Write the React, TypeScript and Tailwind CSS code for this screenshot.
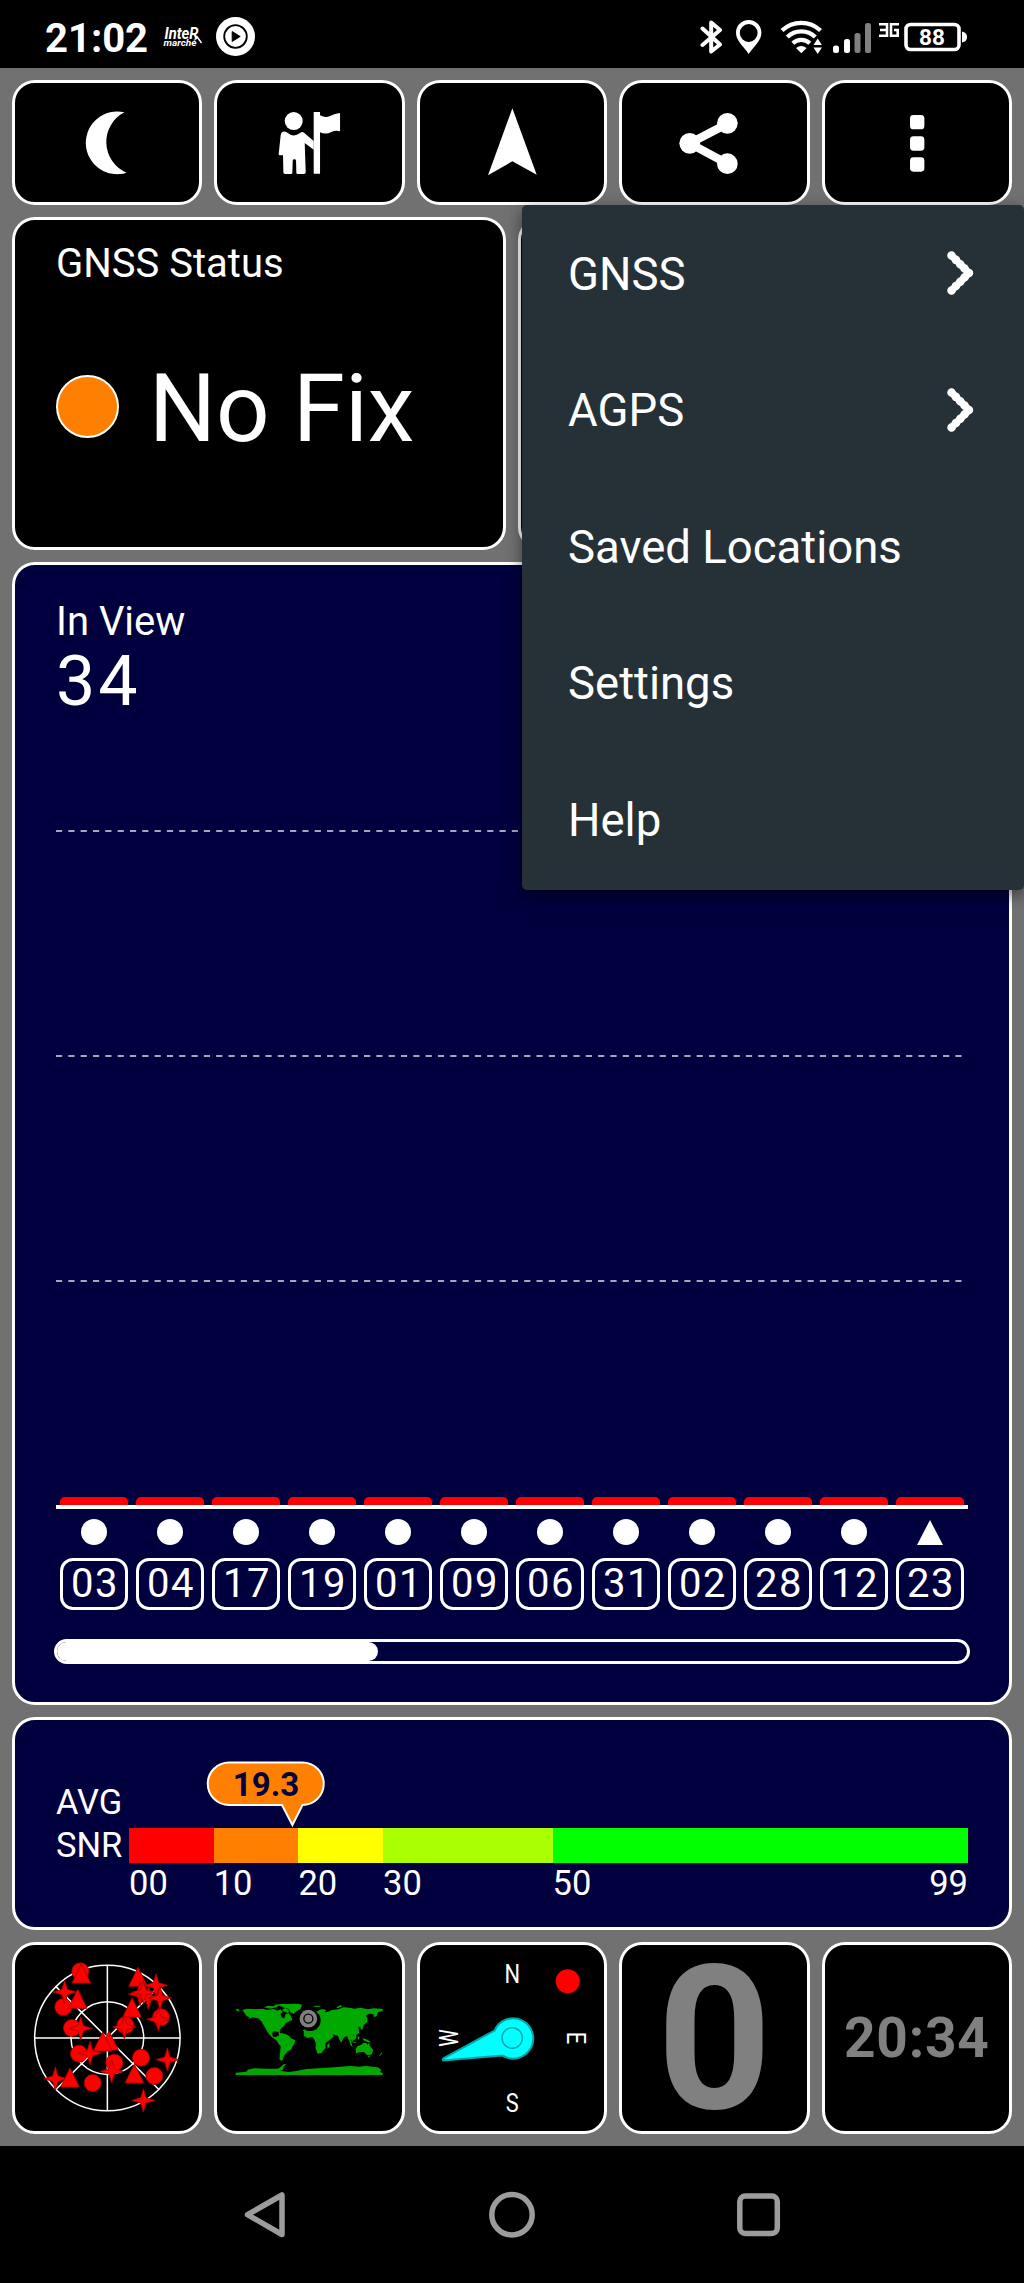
import type { ReactNode } from "react";

const SATELLITES = [
  { id: "03", shape: "circle" },
  { id: "04", shape: "circle" },
  { id: "17", shape: "circle" },
  { id: "19", shape: "circle" },
  { id: "01", shape: "circle" },
  { id: "09", shape: "circle" },
  { id: "06", shape: "circle" },
  { id: "31", shape: "circle" },
  { id: "02", shape: "circle" },
  { id: "28", shape: "circle" },
  { id: "12", shape: "circle" },
  { id: "23", shape: "triangle" },
];

const MENU = [
  { label: "GNSS", submenu: true },
  { label: "AGPS", submenu: true },
  { label: "Saved Locations", submenu: false },
  { label: "Settings", submenu: false },
  { label: "Help", submenu: false },
];

function Card({ className = "", children }: { className?: string; children?: ReactNode }) {
  return <div className={`min-w-0 rounded-[23px] border-[3px] border-white ${className}`}>{children}</div>;
}

function StatusBar() {
  return (
    <header className="flex h-[68px] items-center bg-black pl-[45px] text-white">
      <span className="mt-[9px] w-[103px] text-[40px] leading-none font-bold">21:02</span>
      <svg className="ml-[14px] h-[68px] w-[42px]" viewBox="162 0 42 68" fill="#fff">
        <g fontWeight="700" fontStyle="italic" className="font-[Roboto]">
          <text x="164.500" y="38.500" fontSize="16" textLength="34" lengthAdjust="spacingAndGlyphs">
            InteR
          </text>
          <text x="163.500" y="46" fontSize="9.500" textLength="33" lengthAdjust="spacingAndGlyphs">
            marché
          </text>
        </g>
        <path d="M196.500 36L201.500 43" stroke="#fff" strokeWidth="1.500" />
      </svg>
      <svg className="mt-[5px] ml-[12px] h-[39px] w-[39px]" viewBox="0 0 39 39">
        <circle cx="19.500" cy="19.500" r="19.500" fill="#fff" />
        <circle cx="19.500" cy="19.500" r="11.300" fill="none" stroke="#000" strokeWidth="1.800" />
        <path d="M16.200 14.600v9.800l8-4.900z" fill="#000" stroke="#000" strokeLinejoin="round" />
      </svg>
      <svg className="ml-auto h-[68px] w-[324px]" viewBox="700 0 324 68" fill="#fff">
        <path
          d="M702.5 28.5 L720 44.5 L711.2 51.5 V22.5 L720 30 L702.5 45"
          fill="none"
          stroke="#fff"
          strokeWidth="4"
          strokeLinejoin="round"
          strokeLinecap="round"
        />
        <path
          fillRule="evenodd"
          d="M748.7 20c-7.200 0-12.700 5.600-12.700 12.700 0 7.800 6.500 12.300 12.700 21.300 6.200-9 12.700-13.500 12.700-21.300 0-7.100-5.500-12.700-12.700-12.700zm0 4.100a8.900 8.900 0 1 1 0 17.800 8.900 8.900 0 0 1 0-17.800z"
        />
        <g fill="none" stroke="#fff" strokeWidth="4.200">
          <path d="M782 30.500a28 28 0 0 1 38.500 0" />
          <path d="M787.300 37a20 20 0 0 1 28 0" />
          <path d="M792.800 43.300a12.500 12.500 0 0 1 17 0" />
        </g>
        <path d="M796 48q5.300-4 10.600 0l-5.300 5.200z" />
        <path d="M813.500 45l4.200-6.500 4.200 6.500zM813.500 47.500l4.200 6.500 4.200-6.500z" />
        <rect x="833" y="45.500" width="6" height="7.500" rx="2.500" />
        <rect x="844" y="39" width="6" height="14" rx="2.500" />
        <rect x="854.500" y="33" width="6" height="20" rx="2.500" fill="#808080" />
        <rect x="865" y="23" width="6" height="30" rx="2.500" fill="#808080" />
        <g fill="none" stroke="#fff" strokeWidth="2.600">
          <path d="M879 24.300h8v11.400h-8M880 30h7" />
          <path d="M899 24.300h-8v11.400h6.700v-5.700h-3.700" />
        </g>
        <rect x="906" y="24.500" width="53" height="25" rx="4.500" fill="none" stroke="#fff" strokeWidth="3.600" />
        <path d="M962 31.500q5 1 5 5.500t-5 5.500z" />
        <text x="932" y="45" textAnchor="middle" fontSize="22.500" fontWeight="700" className="font-[Roboto]">
          88
        </text>
      </svg>
    </header>
  );
}

function Toolbar() {
  return (
    <div className="grid h-[125px] grid-cols-5 gap-3">
      <Card className="bg-black">
        <svg className="h-full w-full" viewBox="45 249 553 357" fill="#fff">
          <path d="M373 337A94 94 0 1 0 380 518A100 100 0 0 1 373 337z" />
        </svg>
      </Card>
      <Card className="bg-black">
        <svg className="h-full w-full" viewBox="652 249 553 357" fill="#fff">
          <circle cx="882" cy="363" r="27" />
          <path d="M849 395q8-1 14 3 19 16 38 1 6-5 12-1l29 25v26l-27-20 3 88q0 5-5 5h-19q-4 0-4-4l-1-36q0-4-5-4t-5 4l-1 36q0 4-4 4h-18q-5 0-5-5l-1-51h-10q-3 0-3-4l6-57q1-8 6-10z" />
          <path d="M942 336h19v10q16 9 30 2 15-8 30-9v55q-13-5-26 2-17 9-34 1v124h-19z" />
        </svg>
      </Card>
      <Card className="bg-black">
        <svg className="h-full w-full" viewBox="1259 249 553 357" fill="#fff">
          <path d="M1536 325L1609 524L1536 484L1463 526z" />
        </svg>
      </Card>
      <Card className="bg-black">
        <svg className="h-full w-full" viewBox="331 249 553 357" fill="#fff">
          <path d="M647 371L534 430L647 491" fill="none" stroke="#fff" strokeWidth="25" />
          <circle cx="534" cy="430" r="31" />
          <circle cx="647" cy="370" r="31" />
          <circle cx="647" cy="491" r="31" />
        </svg>
      </Card>
      <Card className="bg-black">
        <svg className="h-full w-full" viewBox="938 249 553 357" fill="#fff">
          <rect x="1193" y="345" width="43" height="43" rx="10" />
          <rect x="1193" y="409" width="43" height="43" rx="10" />
          <rect x="1193" y="472" width="43" height="43" rx="10" />
        </svg>
      </Card>
    </div>
  );
}

function OverflowMenu() {
  return (
    <nav className="absolute top-[205px] right-0 z-10 flex w-[502px] flex-col rounded-[5px] bg-[#263137] pb-[2px] shadow-[0_5px_16px_rgba(0,0,0,0.5)]">
      {MENU.map((item) => (
        <div key={item.label} className="flex h-[136.5px] items-center justify-between pr-[50px] pl-[46px]">
          <span className="mt-[2px] text-[45.5px] leading-none text-white">{item.label}</span>
          {item.submenu && (
            <svg className="h-[44px] w-[27px]" viewBox="0 0 27 44">
              <path
                d="M4.500 4.500L22 22L4.500 39.500"
                fill="none"
                stroke="#fff"
                strokeWidth="7"
                strokeLinejoin="round"
                strokeLinecap="round"
              />
              <path
                d="M4.500 4.500L22 22L4.500 39.500"
                fill="none"
                stroke="#fff"
                strokeWidth="8.500"
                strokeLinecap="round"
                strokeDasharray="0 6.180"
              />
            </svg>
          )}
        </div>
      ))}
    </nav>
  );
}

function GridLine() {
  return (
    <svg className="block h-[2px] w-full" viewBox="0 0 912 2">
      <path d="M0 1H906" stroke="#fff" strokeOpacity="0.65" strokeWidth="2" strokeDasharray="6.200 6.120" />
    </svg>
  );
}

function InViewCard() {
  return (
    <Card className="h-[1143px] bg-[#00003e] px-[41px] pt-[33px] text-white">
      <div className="text-[40px] leading-[47px]">In View</div>
      <div className="text-[70px] leading-[72px] tracking-[3px]">34</div>
      <div className="mt-[113px] flex flex-col gap-[223px]">
        <GridLine />
        <GridLine />
        <GridLine />
      </div>
      <div className="mt-[215px] grid grid-cols-12 border-b-4 border-white">
        {SATELLITES.map((sat) => (
          <div key={sat.id} className="mx-[4px] h-[7.5px] rounded-t-[5px] bg-[#ff0000]" />
        ))}
      </div>
      <div className="mt-[10.5px] grid grid-cols-12">
        {SATELLITES.map((sat) => (
          <div key={sat.id} className="flex flex-col items-center">
            <svg className="h-[26px] w-[26px]" viewBox="0 0 26 26" fill="#fff">
              {sat.shape === "circle" ? <circle cx="13" cy="13" r="13" /> : <path d="M13 1L26 26H0z" />}
            </svg>
            <div className="mt-[13px] flex h-[52px] w-[68px] items-center justify-center rounded-[13px] border-[3px] border-white pl-[2px] text-[40px] leading-none tracking-[1.5px]">
              {sat.id}
            </div>
          </div>
        ))}
      </div>
      <div className="-mx-[2px] mt-[29px] h-[24.5px] overflow-hidden rounded-full border-[3px] border-white">
        <div className="h-full w-[321px] rounded-r-full bg-white" />
      </div>
    </Card>
  );
}

function SnrCard() {
  return (
    <Card className="flex h-[213px] bg-[#00003e] pr-[41px] pl-[41px] text-white">
      <div className="w-[73px] pt-[61px] text-[34.5px] leading-[43px]">
        <div>AVG</div>
        <div>SNR</div>
      </div>
      <div className="flex-1">
        <svg className="mt-[40px] ml-[76px] block h-[68px] w-[121px]" viewBox="205 1760 121 68">
          <path
            d="M229 1762.500H302.500a21 21 0 0 1 0 42.500L292.400 1825L282 1805H229a21.200 21.200 0 0 1 0-42.500z"
            fill="#ff8000"
            stroke="#fff"
            strokeWidth="2"
          />
          <text
            x="266"
            y="1796"
            textAnchor="middle"
            fontSize="33"
            fontWeight="700"
            fill="#00003e"
            className="font-[Roboto]"
          >
            19.3
          </text>
        </svg>
        <div className="flex h-[35px]">
          <div className="w-[84.7px] bg-[#ff0000]" />
          <div className="w-[84.7px] bg-[#ff8000]" />
          <div className="w-[84.7px] bg-[#ffff00]" />
          <div className="w-[169.5px] bg-[#aaff00]" />
          <div className="flex-1 bg-[#00ff00]" />
        </div>
        <div className="flex text-[34.5px] leading-[40px]">
          <div className="w-[84.7px]">00</div>
          <div className="w-[84.7px]">10</div>
          <div className="w-[84.7px]">20</div>
          <div className="w-[169.5px]">30</div>
          <div className="flex flex-1 justify-between">
            <span>50</span>
            <span>99</span>
          </div>
        </div>
      </div>
    </Card>
  );
}

type Marker = { kind: "c" | "t" | "s"; x: number; y: number };

const SKY: Marker[] = [
  { kind: "c", x: 241, y: 124 },
  { kind: "t", x: 244, y: 131 },
  { kind: "c", x: 190, y: 231 },
  { kind: "s", x: 194, y: 186 },
  { kind: "t", x: 233, y: 207 },
  { kind: "t", x: 414, y: 141 },
  { kind: "s", x: 468, y: 166 },
  { kind: "s", x: 420, y: 192 },
  { kind: "s", x: 445, y: 203 },
  { kind: "s", x: 480, y: 204 },
  { kind: "s", x: 430, y: 187 },
  { kind: "c", x: 483, y: 262 },
  { kind: "s", x: 475, y: 268 },
  { kind: "t", x: 396, y: 233 },
  { kind: "c", x: 376, y: 286 },
  { kind: "s", x: 373, y: 291 },
  { kind: "c", x: 216, y: 294 },
  { kind: "s", x: 242, y: 295 },
  { kind: "t", x: 327, y: 332 },
  { kind: "t", x: 308, y: 335 },
  { kind: "c", x: 237, y: 371 },
  { kind: "s", x: 270, y: 369 },
  { kind: "c", x: 343, y: 398 },
  { kind: "s", x: 335, y: 424 },
  { kind: "c", x: 423, y: 383 },
  { kind: "s", x: 502, y: 389 },
  { kind: "t", x: 403, y: 431 },
  { kind: "c", x: 463, y: 438 },
  { kind: "c", x: 278, y: 459 },
  { kind: "s", x: 166, y: 446 },
  { kind: "t", x: 210, y: 443 },
  { kind: "s", x: 430, y: 511 },
];

function SkyMarker({ kind, x, y }: Marker) {
  if (kind === "c") return <circle cx={x} cy={y} r="25.500" />;
  if (kind === "t") return <path d={`M${x} ${y - 29}l28 57h-56z`} />;
  return <path d={`M${x} ${y - 35}l8 27 27 8-27 8-8 27-8-27-27-8 27-8z`} />;
}

function SkyThumb() {
  return (
    <svg className="h-full w-full" viewBox="45 45 553 558">
      <g fill="none" stroke="#fff" strokeWidth="4.500">
        <circle cx="322" cy="324" r="218" />
        <circle cx="322" cy="324" r="109" />
        <path d="M322 106V542M104 324H540M167 169L477 479M477 169L167 479" />
      </g>
      <g fill="#ff0000" stroke="#a80000" strokeWidth="2.500">
        {SKY.map((m, i) => (
          <SkyMarker key={i} {...m} />
        ))}
      </g>
    </svg>
  );
}

function MapThumb() {
  return (
    <svg className="h-full w-full" viewBox="652 45 553 558">
      <g fill="#00a800">
        {/* Americas */}
        <path d="M708 238h10l2 6h-8zM728 240l14-4 28 2 20-2 12 4 20-3 12 5 8-4 8 8-8 6 4 10 8 3 4-13 8-2 8 8 4 12-12 5-8 5-6 9-10 8-2 8 3 10-5-2-2-8-14-1-5 6 3 10 10 1 3-4 5 1-2 9 7 2 3 7-12-3-17-11-12-13-10-18-10-17-10-9-16-3-14 6 4-6-8-4zM792 232l14-5 14 2 10-5 8 2-8 6-16 4zM812 298h14l12 5-8 2z" />
        <path d="M822 225l24-3 50-1 11 3-4 12-12 8-10 8-10-6-4-9-18-5-8-4zM846 240l10-6 12 6-2 10-10-4z" />
        <path d="M837 312l8-3 14 4 10 6 5 6 13 6-3 10-6 9-4 9-10 5-6 8-5 5-4 10 1 3-5 2-6-4 2-18 2-21-9-11-4-10 7-9z" />
        {/* Europe and Asia */}
        <path d="M928 280l2-12 12-1 3-9-3-5 10-9 14-7 14 3-6 7 10-1 12-6 20-2 16-6 18 1 14 3 18-3 22 5 18-3 27 2v7l-14 2-4 12-8 4-3-10-14-1-8 6 6 8-2 12-10 8-3 12-5 2-2-10-7 3 4 11-4 9-12 5-4-2 4 11-4 8-7-6 4 14 3 8-6-3-5-18-6-10-7 1-6 8-3 9-5-3-6-16-10-3-7-2 4 7-13 11-6 3-6-11-6-16-4-6-14-1-5-6-6-1-3 4-8-6-6 3-8 10-8-1zM925 258l4-5 6 10-7 3zM908 242h10l3 4-9 3zM942 227h20v3h-20zM1010 232l14-7 3 4-12 6z" />
        {/* Africa */}
        <path d="M912 304l10-9 22-3 4 6 22 3 4 9 7 11 10 0-5 11-9 8 1 14-8 9-4 6-12 2-7-17 2-13-6-13-5-7-15 3-11-7zM983 344l7-5-1 11-6 7z" />
        {/* Oceania */}
        <path d="M1068 356l5-7 11-5 8-6 9 2 3 5 3-8 5 13 8 9-3 12-8 5-8-2-9-8-14 1-9 3zM1104 378h6l-2 5zM1138 377l8-10 1 4-10 9zM1042 316l8 9 4 8-7-4zM1054 334l16 3v2l-16-3zM1060 318l8-5 2 8-4 9-7-3zM1074 320l5-1-1 10-4-2zM1088 325l10 2 12 6 3 5-12-3-10-4zM1070 296l5 3 4 13-7-7zM1092 270l6-11 2 7-4 12-9 6z" />
        {/* Antarctica */}
        <path d="M708 428l32-3 4-6 20-4 40 1 30 0 8-4 10-9 8-2-8 9-2 8-8 4 24 4 24-3 30-6 50-3 42-3 40-3 26 2 20-2 36 4 11 7-4 6 8 4v6H708z" />
      </g>
      <circle cx="931" cy="271" r="32" fill="#000" />
      <circle cx="926" cy="266" r="21" fill="#000" stroke="#808080" strokeWidth="11" />
      <circle cx="926" cy="266" r="11.500" fill="#808080" />
    </svg>
  );
}

function CompassThumb() {
  return (
    <svg className="h-full w-full" viewBox="419.800 1945 184.400 186" fill="#fff">
      <g fontSize="26" textAnchor="middle" className="font-[Roboto]">
        <text transform="translate(512 1982.700) scale(.84 1)">N</text>
        <text transform="translate(512 2112) scale(.84 1)">S</text>
        <text transform="translate(457.700 2038) rotate(-90) scale(.76 1)">W</text>
        <text transform="translate(567 2038) rotate(90) scale(.84 1)">E</text>
      </g>
      <circle cx="567.500" cy="1981.300" r="12" fill="#ff0000" />
      <path
        d="M494.300 2030.500A20.200 20.200 0 1 1 502 2055.400L443 2060.500Q442 2059 443.500 2058z"
        fill="#00ffff"
        stroke="#00a6a8"
        strokeWidth="2"
      />
      <circle cx="512" cy="2038" r="10.200" fill="none" stroke="#00a6a8" strokeWidth="1.500" />
    </svg>
  );
}

function NavBar() {
  return (
    <footer className="h-[137px] bg-black">
      <svg className="h-full w-full" viewBox="0 2146 1024 137" fill="none" stroke="#9c9c9c" strokeWidth="5.500">
        <path d="M247.500 2214.700L282 2195V2234.500z" strokeLinejoin="round" />
        <circle cx="512" cy="2214.700" r="20.200" />
        <rect x="739.800" y="2196" width="37.500" height="37.500" rx="5.500" />
      </svg>
    </footer>
  );
}

export default function App() {
  return (
    <div className="relative flex h-[2283px] w-[1024px] flex-col overflow-hidden bg-[#717171] font-[Roboto,sans-serif]">
      <StatusBar />
      <main className="flex flex-1 flex-col gap-3 p-3">
        <Toolbar />
        <div className="grid h-[333px] grid-cols-2 gap-3">
          <Card className="bg-black px-[41px] pt-[20px] text-white">
            <div className="text-[40px] leading-[47px]">GNSS Status</div>
            <div className="mt-[66px] flex items-center gap-[30px]">
              <div className="mt-[-5px] h-[63px] w-[63px] rounded-full border-2 border-white bg-[#ff8000]" />
              <div className="text-[94px] leading-[112px]">No Fix</div>
            </div>
          </Card>
          <Card className="bg-black" />
        </div>
        <InViewCard />
        <SnrCard />
        <div className="grid h-[192px] grid-cols-5 gap-3">
          <Card className="bg-black">
            <SkyThumb />
          </Card>
          <Card className="bg-black">
            <MapThumb />
          </Card>
          <Card className="bg-black">
            <CompassThumb />
          </Card>
          <Card className="flex items-center justify-center bg-black text-[#808080]">
            <span className="mt-[4px] text-[200px] leading-[180px] font-bold">0</span>
          </Card>
          <Card className="flex items-center justify-center bg-black text-[#808080]">
            <span className="text-[55px] leading-none font-bold tracking-[0.8px]">20:34</span>
          </Card>
        </div>
      </main>
      <NavBar />
      <OverflowMenu />
    </div>
  );
}
